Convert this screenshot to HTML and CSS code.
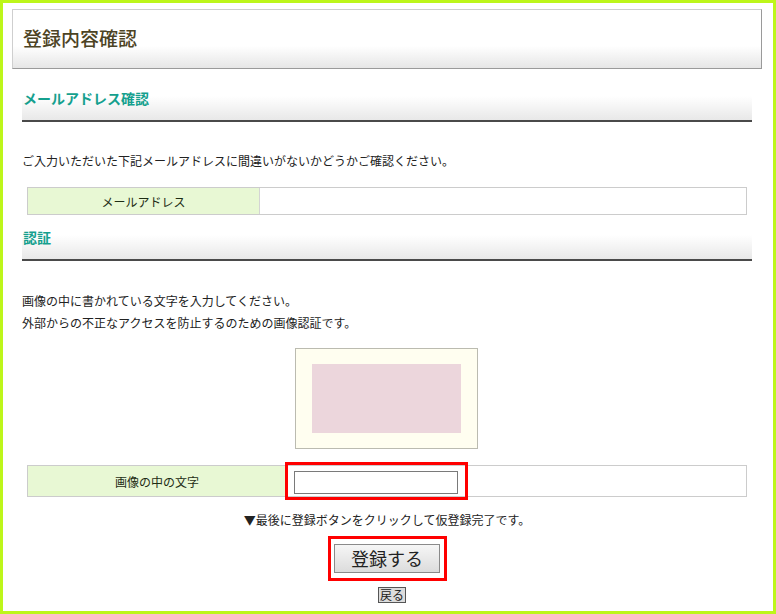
FILE: index.html
```html
<!DOCTYPE html>
<html lang="ja">
<head>
<meta charset="utf-8">
<title>登録内容確認</title>
<link rel="stylesheet" href="styles.css">
</head>
<body>
<div class="frame">
  <div class="page-head"><h1 class="page-title">登録内容確認</h1></div>

  <div class="content">
    <h2 class="sec-head sec-head-first">メールアドレス確認</h2>
    <p class="lead">ご入力いただいた下記メールアドレスに間違いがないかどうかご確認ください。</p>
    <div class="row row-mail">
      <div class="row-label">メールアドレス</div>
      <div class="row-value"></div>
    </div>

    <h2 class="sec-head sec-head-auth">認証</h2>
    <p class="lead lead-auth">画像の中に書かれている文字を入力してください。<br>外部からの不正なアクセスを防止するのための画像認証です。</p>

    <div class="captcha"><div class="captcha-img"></div></div>

    <div class="row row-code">
      <div class="row-label">画像の中の文字</div>
      <div class="row-value">
        <span class="hl hl-input"><input class="code-input" type="text"></span>
      </div>
    </div>

    <p class="note">▼最後に登録ボタンをクリックして仮登録完了です。</p>

    <div class="actions">
      <span class="hl hl-btn"><button class="btn-submit" type="button">登録する</button></span>
      <button class="btn-back" type="button">戻る</button>
    </div>
  </div>
</div>
</body>
</html>
```

FILE: styles.css
```css
* { box-sizing: border-box; }
html, body { margin: 0; padding: 0; background: #fff; }
body {
  font-family: "Noto Sans CJK JP", "DejaVu Sans", sans-serif;
  font-size: 12px;
  color: #222;
}
.frame {
  width: 776px;
  height: 614px;
  border: 3px solid #bdf61a;
  overflow: hidden;
  display: flex;
  flex-direction: column;
}
.page-head {
  margin: 6px 0 0 9px;
  width: 750px;
  height: 60px;
  border: 1px solid #cfcfcf;
  border-right-color: #9a9a9a;
  border-bottom-color: #9a9a9a;
  background: linear-gradient(#fff 0, #fff 62%, #e6e6e6 100%);
  display: flex;
  align-items: center;
  padding-left: 10px;
}
.page-title {
  margin: 0;
  font-size: 19px;
  font-weight: 500;
  color: #4c4324;
  line-height: 24px;
  margin-top: -2px;
}
.content {
  margin-left: 19px;
  width: 730px;
  display: flex;
  flex-direction: column;
}
.sec-head {
  margin: 11px 0 0;
  height: 42px;
  padding: 8px 0 0 1px;
  font-size: 14px;
  line-height: 20px;
  font-weight: bold;
  color: #15a08e;
  border-bottom: 2px solid #4a4a4a;
  background: linear-gradient(#fff 0, #fff 40%, #e8e8e8 100%);
}
.sec-head-auth { margin-top: 4px; }
.lead {
  margin: 29px 0 0;
  line-height: 20px;
  color: #222;
}
.lead-auth { line-height: 22px; margin-top: 29px; }
.row {
  margin: 16px 5px 0;
  width: 720px;
  border: 1px solid #cccccc;
  display: flex;
}
.row-mail { height: 28px; }
.row-code { height: 32px; }
.row-label {
  width: 232px;
  background: #e8f8d4;
  border-right: 1px solid #d4d4d4;
  display: flex;
  align-items: center;
  justify-content: center;
  color: #1e2d14;
}
.row-code .row-label { width: 259px; }
.row-value {
  flex: 1;
  display: flex;
  align-items: center;
}
.captcha {
  margin: 14px auto 0;
  width: 183px;
  height: 101px;
  border: 1px solid #bbbbb0;
  background: #fffef0;
  padding: 15px 16px;
  position: relative;
  left: -1px;
}
.captcha-img {
  width: 149px;
  height: 69px;
  background: #ecd6dc;
}
.hl {
  display: inline-flex;
  border: 3px solid #ff0000;
}
.hl-input {
  margin-left: -2px;
  height: 38px;
  width: 183px;
  padding: 6px 0 0 6px;
}
.code-input {
  width: 164px;
  height: 23px;
  border: 1px solid #7a7a7a;
  margin: 0;
  padding: 0;
  background: #fff;
}
.note {
  margin: 13px 0 0;
  text-align: center;
  line-height: 20px;
  color: #222;
}
.actions {
  margin-top: 6px;
  display: flex;
  flex-direction: column;
  align-items: center;
}
.hl-btn {
  width: 119px;
  height: 45px;
  padding: 5px 0 0 3px;
  margin-left: 1px;
}
.btn-submit {
  width: 106px;
  height: 29px;
  margin: 0;
  padding: 0;
  font-family: "Noto Sans CJK JP", sans-serif;
  font-size: 18px;
  line-height: 27px;
  color: #222;
  border: 1px solid #8a8a8a;
  background: linear-gradient(#f6f6f6, #dcdcdc);
}
.btn-back {
  margin: 6px 0 0 10px;
  height: 16px;
  padding: 0 1px;
  white-space: nowrap;
  font-family: "Noto Sans CJK JP", sans-serif;
  font-size: 12px;
  line-height: 14px;
  color: #222;
  border: 1px solid #555;
  background: #dcdcdc;
}
```
